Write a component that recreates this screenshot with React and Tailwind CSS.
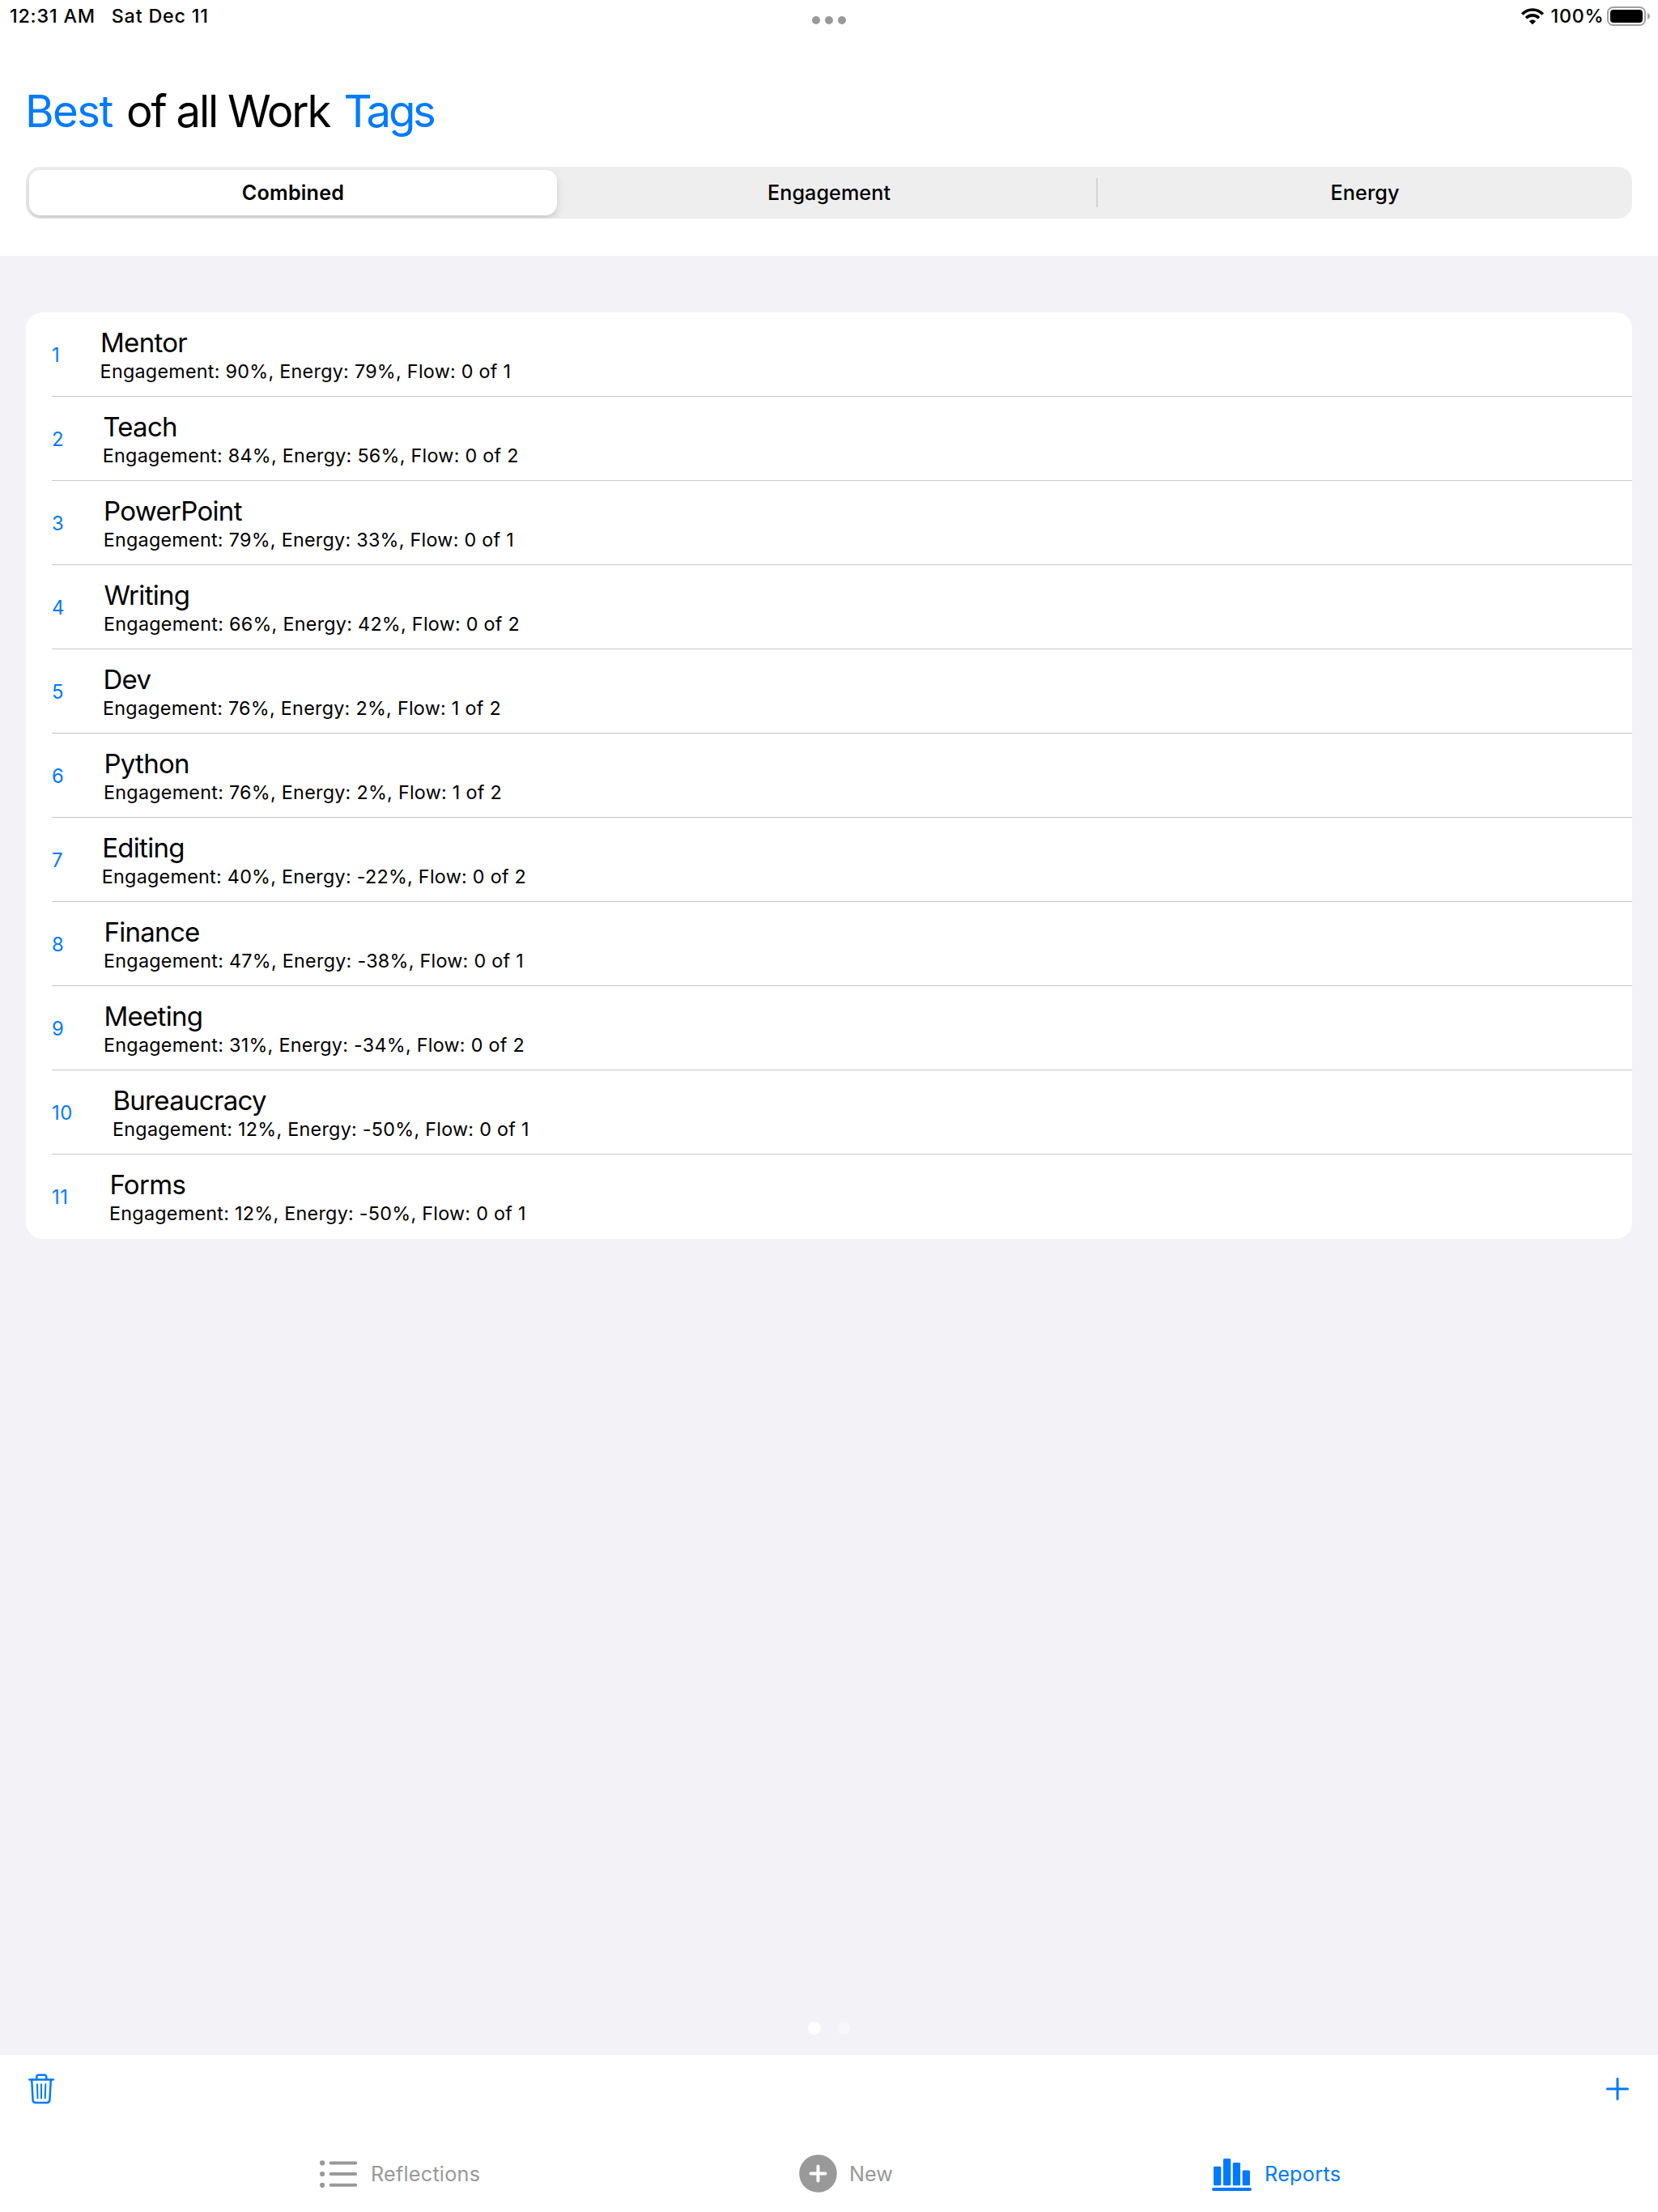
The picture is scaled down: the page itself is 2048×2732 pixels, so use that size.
import React from "react";

const TAGS = [
  { name: "Mentor", detail: "Engagement: 90%, Energy: 79%, Flow: 0 of 1", indent: 59.6 },
  { name: "Teach", detail: "Engagement: 84%, Energy: 56%, Flow: 0 of 2", indent: 62.8 },
  { name: "PowerPoint", detail: "Engagement: 79%, Energy: 33%, Flow: 0 of 1", indent: 63.7 },
  { name: "Writing", detail: "Engagement: 66%, Energy: 42%, Flow: 0 of 2", indent: 64 },
  { name: "Dev", detail: "Engagement: 76%, Energy: 2%, Flow: 1 of 2", indent: 63 },
  { name: "Python", detail: "Engagement: 76%, Energy: 2%, Flow: 1 of 2", indent: 64 },
  { name: "Editing", detail: "Engagement: 40%, Energy: -22%, Flow: 0 of 2", indent: 61.8 },
  { name: "Finance", detail: "Engagement: 47%, Energy: -38%, Flow: 0 of 1", indent: 64 },
  { name: "Meeting", detail: "Engagement: 31%, Energy: -34%, Flow: 0 of 2", indent: 64 },
  { name: "Bureaucracy", detail: "Engagement: 12%, Energy: -50%, Flow: 0 of 1", indent: 75 },
  { name: "Forms", detail: "Engagement: 12%, Energy: -50%, Flow: 0 of 1", indent: 71 },
];

function WifiIcon() {
  return (
    <svg width="28" height="21" viewBox="0 0 28 21" fill="none" stroke="#000" strokeWidth="3.6">
      <path d="M1.3 7.6C8.2.2 19.8.2 26.7 7.6" />
      <path d="M6 12.3c4.4-4.6 11.6-4.6 16 0" />
      <path d="M14 20.3l-4.1-4.1c2.3-2.1 5.9-2.1 8.2 0z" fill="#000" stroke="none" />
    </svg>
  );
}

function BatteryIcon() {
  return (
    <svg width="54" height="24" viewBox="0 0 54 24">
      <rect x="1" y="1" width="46" height="22" rx="6.5" fill="none" stroke="#a0a0a0" strokeWidth="2" />
      <rect x="4" y="4" width="40" height="16" rx="4" fill="#000" />
      <path d="M50 8c4 1.500 4 6.500 0 8z" fill="#a0a0a0" />
    </svg>
  );
}

function StatusBar() {
  return (
    <header className="grid h-10 grid-cols-3 text-[23.3px] leading-10 font-medium tracking-[0.8px]">
      <div className="flex gap-[20px] pl-3">
        <span>12:31 AM</span>
        <span>Sat Dec 11</span>
      </div>
      <div className="flex items-start justify-center gap-1.5 pt-5">
        <i className="size-2.5 rounded-full bg-[#999]" />
        <i className="size-2.5 rounded-full bg-[#999]" />
        <i className="size-2.5 rounded-full bg-[#999]" />
      </div>
      <div className="flex items-center justify-end pr-[9px]">
        <WifiIcon />
        <span className="ml-2 mr-[3.500px]">100%</span>
        <BatteryIcon />
      </div>
    </header>
  );
}

function SegmentedControl() {
  return (
    <div className="mx-8 flex h-16 overflow-hidden rounded-[18px] bg-[#eeeeef] p-1 text-[25.2px] leading-[56px]">
      <div className="w-[652px] rounded-[14px] bg-white text-center font-semibold tracking-[0.17px] shadow-[0_5px_12px_rgba(0,0,0,0.13),0_2px_2px_rgba(0,0,0,0.04)]">
        Combined
      </div>
      <div className="ml-[7.500px] mr-[1.500px] w-[657px] text-center font-medium tracking-[0.05px]">Engagement</div>
      <div className="mt-2.5 h-9 w-0.5 bg-[#d4d4d6]" />
      <div className="flex-1 pl-[4px] text-center font-medium tracking-[0.1px]">Energy</div>
    </div>
  );
}

function TagRow({ rank, tag, last }) {
  return (
    <div className={last ? "ml-8 flex h-[104px]" : "ml-8 flex h-[104px] border-b border-[#c6c6c8]"}>
      <div className="shrink-0 pt-[36px] text-[23.8px] leading-[34px] tracking-[0.500px] text-[#007aff]" style={{ width: tag.indent }}>
        {rank}
      </div>
      <div className="pt-[17px]">
        <div className="pl-[0.400px] text-[33px] leading-10 tracking-[-0.7px]">{tag.name}</div>
        <div className="text-[23.3px] leading-[31px] tracking-[0.280px]">{tag.detail}</div>
      </div>
    </div>
  );
}

function TrashIcon() {
  return (
    <svg width="34" height="38" viewBox="0 0 34 38" fill="none" stroke="#007aff" strokeWidth="2.500" strokeLinecap="round" strokeLinejoin="round">
      <path d="M2.200 7.500H31.800" />
      <path d="M11.300 7.300V4.300Q11.300 1.700 13.900 1.700H20.700Q23.300 1.700 23.300 4.300V7.300" />
      <path d="M5.200 7.700L6.600 32.700Q6.800 36 9.900 36H24.100Q27.200 36 27.400 32.700L28.800 7.700" />
      <path d="M12 13.300L12.500 30.600M17 13.300V30.600M22.200 13.300L21.700 30.600" strokeWidth="2" />
    </svg>
  );
}

function PlusIcon() {
  return (
    <svg width="28" height="28" viewBox="0 0 28 28" stroke="#007aff" strokeWidth="3" strokeLinecap="round">
      <path d="M14 1.500V26.500M1.500 14H26.500" />
    </svg>
  );
}

function ListIcon() {
  return (
    <svg width="47" height="34" viewBox="0 0 47 34" fill="#999" stroke="#999" strokeLinecap="round">
      <g stroke="none">
        <circle cx="3.100" cy="3.400" r="3.100" />
        <circle cx="3.100" cy="17" r="3.100" />
        <circle cx="3.100" cy="30.800" r="3.100" />
      </g>
      <path d="M13.700 3.400H44.200M13.700 17H44.200M13.700 30.800H44.200" strokeWidth="4" />
    </svg>
  );
}

function NewIcon() {
  return (
    <svg width="47" height="47" viewBox="0 0 47 47">
      <circle cx="23.500" cy="23.500" r="23.300" fill="#999" />
      <path d="M23.500 14.500V32.500M14.500 23.500H32.500" stroke="#fff" strokeWidth="4" strokeLinecap="round" />
    </svg>
  );
}

function ReportsIcon() {
  return (
    <svg className="mt-[3px]" width="49" height="41" viewBox="0 0 49 41" fill="#007aff">
      <rect x="2" y="9.700" width="9.300" height="23.500" rx="1.500" />
      <rect x="14" y="0" width="9.300" height="33.200" rx="1.500" />
      <rect x="25.800" y="5" width="9.300" height="28.200" rx="1.500" />
      <rect x="37.700" y="14.500" width="9.300" height="18.700" rx="1.500" />
      <rect x="0" y="36" width="49" height="4" rx="2" />
    </svg>
  );
}

export default function App() {
  return (
    <div className="flex h-[2732px] w-[2048px] flex-col overflow-hidden bg-white font-['Inter',sans-serif] text-black">
      <StatusBar />
      <div className="h-[276px] shrink-0">
        <h1 className="flex h-[166px] pl-[31px] pt-[62px] text-[54.5px] leading-[70px] font-normal whitespace-pre">
          <span className="w-[125px] tracking-[-1.600px] text-[#007aff]">Best</span>
          <span className="w-[268.500px] tracking-[-2.200px]">of all Work</span>
          <span className="tracking-[-3.200px] text-[#007aff]">Tags</span>
        </h1>
        <SegmentedControl />
      </div>
      <main className="flex h-[2222px] shrink-0 flex-col justify-between bg-[#f2f2f7] px-8 pt-[70px] pb-[25px]">
        <div className="rounded-[20px] bg-white">
          {TAGS.map((tag, i) => (
            <TagRow key={tag.name} rank={i + 1} tag={tag} last={i === TAGS.length - 1} />
          ))}
        </div>
        <div className="flex justify-center gap-5">
          <i className="size-4 rounded-full bg-white" />
          <i className="size-4 rounded-full bg-[#f8f8fa]" />
        </div>
      </main>
      <div className="flex h-[84px] shrink-0 items-center justify-between pr-9 pl-[34px]">
        <TrashIcon />
        <PlusIcon />
      </div>
      <nav className="flex h-[110px] shrink-0 items-start pt-[38px] pl-[395px] text-[25.2px] leading-[47px] text-[#999]">
        <div className="flex w-[592px] items-center">
          <ListIcon />
          <span className="ml-[16px] pt-[2px] tracking-[0.230px]">Reflections</span>
        </div>
        <div className="flex w-[510px] items-center">
          <NewIcon />
          <span className="ml-[15px] pt-[2px]">New</span>
        </div>
        <div className="flex items-center text-[#007aff]">
          <ReportsIcon />
          <span className="ml-4 pt-[2px] tracking-[0.300px]">Reports</span>
        </div>
      </nav>
    </div>
  );
}
